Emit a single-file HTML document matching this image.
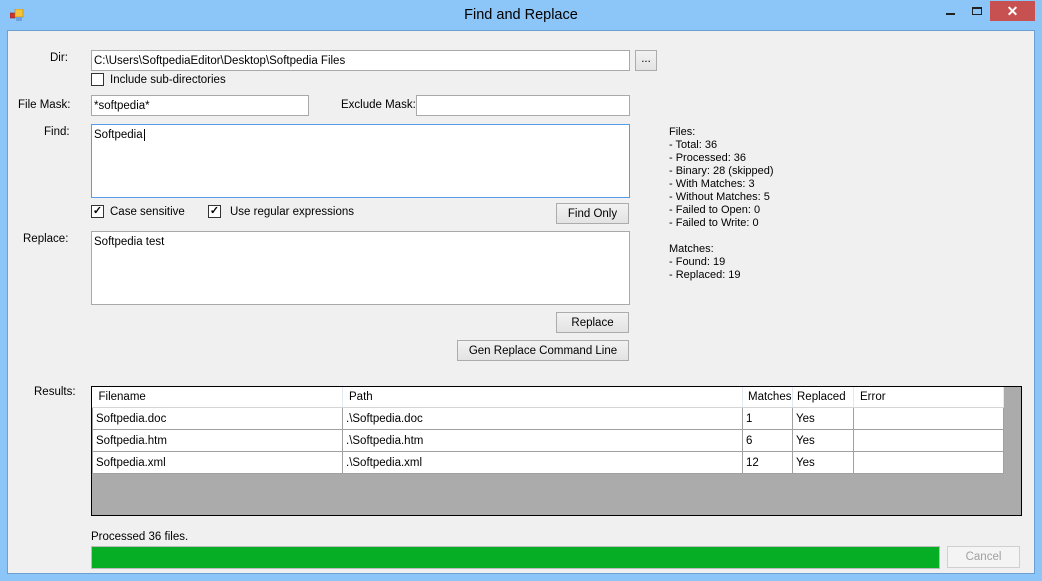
<!DOCTYPE html>
<html><head><meta charset="utf-8"><style>
*{box-sizing:border-box;margin:0;padding:0}
body{width:1042px;height:581px;background:#8cc5f7;font-family:"Liberation Sans",sans-serif;font-size:11.5px;color:#000;position:relative;overflow:hidden}
.a{position:absolute;white-space:nowrap}
.client{position:absolute;left:7px;top:30px;width:1028px;height:544px;background:#f0f0f0;border:1px solid #6c9fd2}
.tb{position:absolute;background:#fff;border:1px solid #a9a9a9;padding:3px 2px;line-height:14px}
.btn{position:absolute;background:linear-gradient(#f2f2f2,#e3e3e3);border:1px solid #acacac;text-align:center;line-height:20px}
.cb{position:absolute;width:13px;height:13px;border:1px solid #333;background:#fff;font-size:11px;line-height:11px;text-align:center;font-weight:bold}
table{border-collapse:collapse;position:absolute;left:92px;top:387px;background:#fff;table-layout:fixed;width:911px}
td{border:1px solid #a0a0a0;height:22px;padding:1px 3px 0;font-size:11.5px;overflow:hidden;white-space:nowrap}
tr.h td{border:none;border-right:1px solid #e3e8f0;border-bottom:1px solid #d5d5d5;height:20px;padding-left:6px}
</style></head><body>
<svg class="a" style="left:10px;top:9px" width="14" height="13"><rect x="0" y="4" width="5" height="5" fill="#c33" stroke="#822" stroke-width=".6"/><rect x="5" y="0" width="8" height="8" fill="#f3c43c" stroke="#b88a10" stroke-width=".6"/><rect x="6" y="8" width="6" height="4" fill="#6fa0e0"/></svg>
<div class="a" style="left:0;width:1042px;top:7px;text-align:center;font-size:14.5px;color:#000">Find and Replace</div>
<div class="a" style="left:946px;top:13px;width:9px;height:2px;background:#222"></div>
<div class="a" style="left:972px;top:7px;width:10px;height:8px;border:1px solid #222;border-top-width:2px"></div>
<div class="a" style="left:990px;top:1px;width:45px;height:20px;background:#c75050;color:#fff;text-align:center;font-weight:bold;font-size:14px;line-height:20px">✕</div>
<div class="client"></div>
<div class="a" style="left:50px;top:52px">Dir:</div>
<div class="tb" style="left:91px;top:50px;width:539px;height:21px">C:\Users\SoftpediaEditor\Desktop\Softpedia Files</div>
<div class="btn" style="left:635px;top:50px;width:22px;height:21px;line-height:17px">...</div>
<div class="cb" style="left:91px;top:73px"></div>
<div class="a" style="left:110px;top:74px">Include sub-directories</div>
<div class="a" style="left:18px;top:99px">File Mask:</div>
<div class="tb" style="left:91px;top:95px;width:218px;height:21px">*softpedia*</div>
<div class="a" style="left:341px;top:99px">Exclude Mask:</div>
<div class="tb" style="left:416px;top:95px;width:214px;height:21px"></div>
<div class="a" style="left:44px;top:126px">Find:</div>
<div class="tb" style="left:91px;top:124px;width:539px;height:74px;border-color:#569de5">Softpedia<span style="border-left:1px solid #000;margin-left:1px"></span></div>
<div class="cb" style="left:91px;top:205px">✓</div>
<div class="a" style="left:110px;top:206px">Case sensitive</div>
<div class="cb" style="left:208px;top:205px">✓</div>
<div class="a" style="left:230px;top:206px">Use regular expressions</div>
<div class="btn" style="left:556px;top:203px;width:73px;height:21px">Find Only</div>
<div class="a" style="left:23px;top:233px">Replace:</div>
<div class="tb" style="left:91px;top:231px;width:539px;height:74px">Softpedia test</div>
<div class="btn" style="left:556px;top:312px;width:73px;height:21px">Replace</div>
<div class="btn" style="left:457px;top:340px;width:172px;height:21px">Gen Replace Command Line</div>
<div class="a" style="left:669px;top:126px;line-height:13px;font-size:11px">Files:<br>- Total: 36<br>- Processed: 36<br>- Binary: 28 (skipped)<br>- With Matches: 3<br>- Without Matches: 5<br>- Failed to Open: 0<br>- Failed to Write: 0<br><br>Matches:<br>- Found: 19<br>- Replaced: 19</div>
<div class="a" style="left:34px;top:386px">Results:</div>
<div class="a" style="left:91px;top:386px;width:931px;height:130px;background:#ababab;border:1px solid #000"></div>
<table>
<colgroup><col style="width:250px"><col style="width:400px"><col style="width:50px"><col style="width:61px"><col style="width:150px"></colgroup>
<tr class="h"><td>Filename</td><td>Path</td><td style="padding-left:5px">Matches</td><td style="padding-left:4px">Replaced</td><td>Error</td></tr>
<tr><td>Softpedia.doc</td><td>.\Softpedia.doc</td><td>1</td><td>Yes</td><td></td></tr>
<tr><td>Softpedia.htm</td><td>.\Softpedia.htm</td><td>6</td><td>Yes</td><td></td></tr>
<tr><td>Softpedia.xml</td><td>.\Softpedia.xml</td><td>12</td><td>Yes</td><td></td></tr>
</table>
<div class="a" style="left:91px;top:531px">Processed 36 files.</div>
<div class="a" style="left:91px;top:546px;width:849px;height:23px;background:#06ae26;border:1px solid #bcbcbc"></div>
<div class="btn" style="left:947px;top:546px;width:73px;height:22px;color:#a0a0a0;background:#f4f4f4;border-color:#d0d0d0">Cancel</div>
</body></html>
